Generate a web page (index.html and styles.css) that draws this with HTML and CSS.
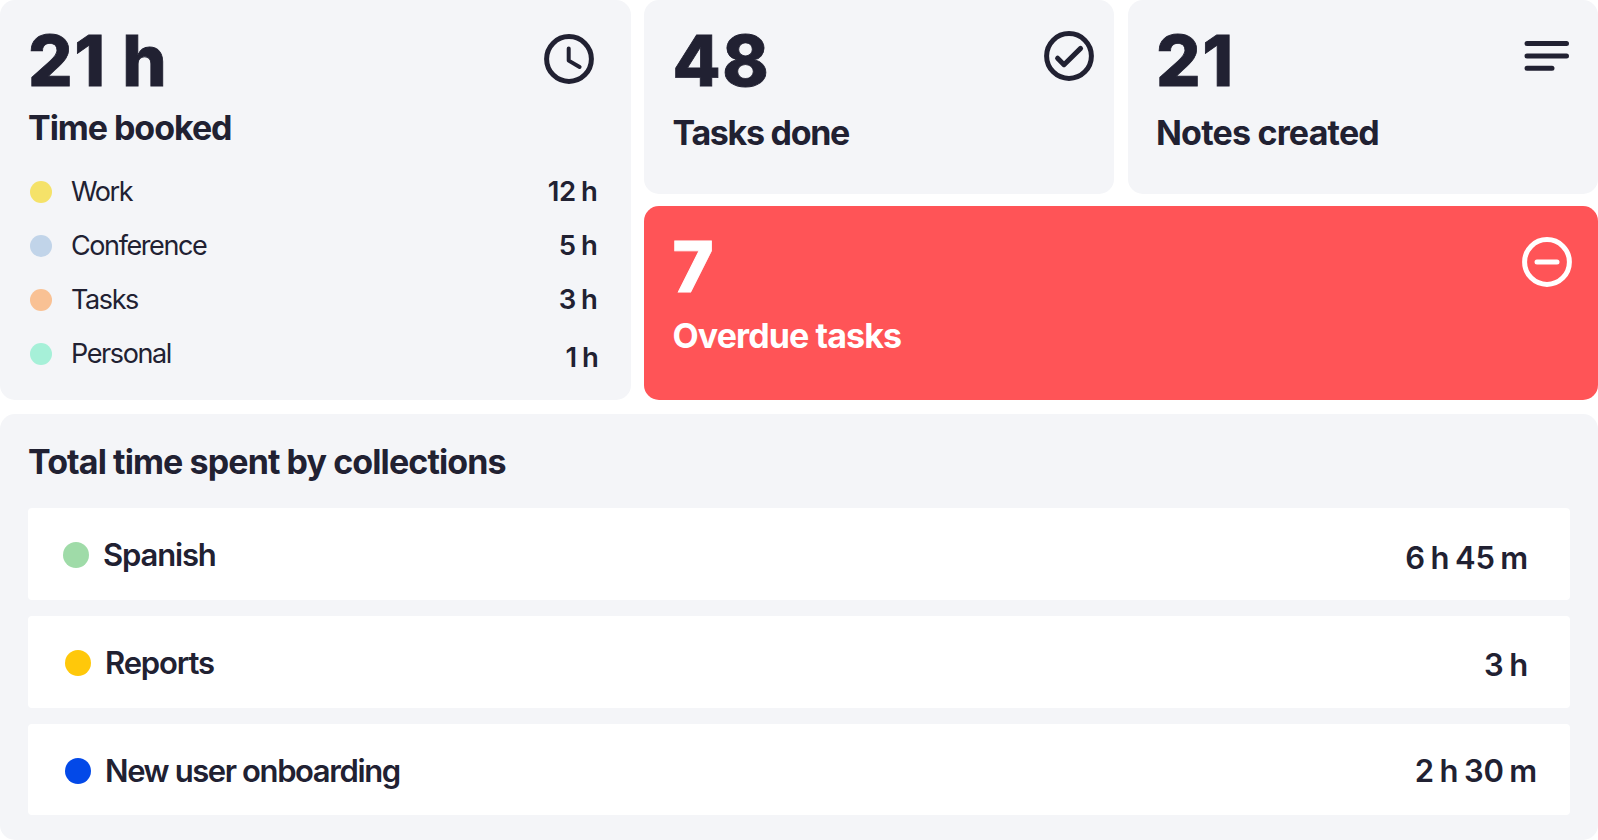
FILE: index.html
```html
<!DOCTYPE html>
<html lang="en">
<head>
    <meta charset="UTF-8">
    <meta name="viewport" content="width=device-width, initial-scale=1.0">
    <title>Time Summary</title>
    <link rel="stylesheet" href="styles.css">
</head>
<body>
    <div class="dashboard">
        <section class="card time-card">
            <div class="card-head">
                <div class="number">21 h</div>
                <svg class="icon" viewBox="0 0 50 50">
                    <circle cx="25" cy="25" r="22.4"/>
                    <path class="thin" d="M24.7 14.5V26.6L35.6 33"/>
                </svg>
            </div>
            <h2>Time booked</h2>
            <ul class="time-list">
                <li><span class="dot yellow"></span><span class="name">Work</span><span class="hours">12 h</span></li>
                <li><span class="dot blue"></span><span class="name">Conference</span><span class="hours">5 h</span></li>
                <li><span class="dot orange"></span><span class="name">Tasks</span><span class="hours">3 h</span></li>
                <li><span class="dot mint"></span><span class="name">Personal</span><span class="hours last">1 h</span></li>
            </ul>
        </section>

        <section class="card tasks-card">
            <div class="card-head">
                <div class="number">48</div>
                <svg class="icon" viewBox="0 0 50 50">
                    <circle cx="25" cy="25" r="22.4"/>
                    <path d="M13.6 27.2L20 33.7L36.6 17.4"/>
                </svg>
            </div>
            <h2>Tasks done</h2>
        </section>

        <section class="card notes-card">
            <div class="card-head">
                <div class="number">21</div>
                <svg class="icon" viewBox="0 0 50 50">
                    <path d="M5 12.5H44.5M5 24.9H44.5M5 37.3H30"/>
                </svg>
            </div>
            <h2>Notes created</h2>
        </section>

        <section class="card overdue-card">
            <div class="card-head">
                <div class="number">7</div>
                <svg class="icon" viewBox="0 0 50 50">
                    <circle cx="25" cy="25" r="22.4"/>
                    <path d="M15 25H35"/>
                </svg>
            </div>
            <h2>Overdue tasks</h2>
        </section>

        <section class="card collections-card">
            <h2>Total time spent by collections</h2>
            <div class="collections">
                <div class="collection spanish">
                    <span class="dot green"></span>
                    <span class="name">Spanish</span>
                    <span class="hours">6 h 45 m</span>
                </div>
                <div class="collection reports">
                    <span class="dot amber"></span>
                    <span class="name">Reports</span>
                    <span class="hours">3 h</span>
                </div>
                <div class="collection onboarding">
                    <span class="dot royal"></span>
                    <span class="name">New user onboarding</span>
                    <span class="hours">2 h 30 m</span>
                </div>
            </div>
        </section>
    </div>
</body>
</html>
```
FILE: styles.css
```css
* {
    box-sizing: border-box;
}
body {
    margin: 0;
    background: white;
    color: #212132;
    font-family: Inter, "Liberation Sans", sans-serif;
}
.dashboard {
    display: grid;
    grid-template-columns: 630.5px 470px 470.5px;
    grid-template-rows: 194px 194px 428px;
    column-gap: 13.5px;
    row-gap: 12px;
    height: 840px;
}
.card {
    background: #f4f5f8;
    border-radius: 15px;
    padding: 26px 26px 0 28.5px;
}
.card-head {
    display: flex;
    justify-content: space-between;
    align-items: flex-start;
}
.number {
    font-size: 70px;
    line-height: 70px;
    font-weight: 800;
    letter-spacing: 1.5px;
    word-spacing: -1px;
    -webkit-text-stroke: 0.8px currentColor;
}
h2 {
    margin: 17px 0 0;
    font-size: 34px;
    line-height: 40px;
    font-weight: 660;
    letter-spacing: -0.9px;
}
.icon {
    width: 50px;
    height: 50px;
    margin-top: 5px;
    fill: none;
    stroke: currentColor;
    stroke-width: 5;
    stroke-linecap: round;
    stroke-linejoin: round;
}
.icon .thin {
    stroke-width: 4;
}
.dot {
    flex: none;
    border-radius: 50%;
}

/* Time booked */
.time-card {
    grid-row: 1 / 3;
    padding-left: 28px;
    padding-right: 33px;
}
.time-card .icon {
    margin-top: 8px;
    margin-right: 3.5px;
}
.time-card h2 {
    margin-top: 12px;
    letter-spacing: -1.05px;
}
.time-list {
    list-style: none;
    margin: 16px 0 0;
    padding: 0;
}
.time-list li {
    display: flex;
    align-items: center;
    height: 54px;
    font-size: 27.5px;
    letter-spacing: -0.3px;
}
.time-list .dot {
    width: 22px;
    height: 22px;
    margin: 1px 19px 0 2px;
}
.time-list .name {
    font-size: 27px;
    letter-spacing: -1.4px;
}
.time-list .hours {
    margin-left: auto;
    font-weight: 560;
    word-spacing: -1.5px;
}
.time-list .last {
    padding-top: 7px;
    margin-right: -1px;
}

/* Right side */
.tasks-card {
    padding-right: 20px;
}
.tasks-card h2 {
    letter-spacing: -1.3px;
}
.notes-card h2 {
    letter-spacing: -0.8px;
}
.overdue-card {
    grid-column: 2 / 4;
    background: #ff5457;
    color: white;
}
.overdue-card h2 {
    margin-top: 14px;
}

/* Collections */
.collections-card {
    grid-column: 1 / 4;
    margin-top: 2px;
    padding: 28px 28px 0;
}
.collections-card h2 {
    margin: 0;
}
.collections {
    display: grid;
    grid-template-rows: 92px 92px 91px;
    gap: 16px;
    margin-top: 26px;
}
.collection {
    display: flex;
    align-items: center;
    background: white;
    border-radius: 4px;
    padding: 1px 42px 0 37px;
    font-size: 31px;
    font-weight: 560;
    letter-spacing: -1.15px;
}
.collection .dot {
    width: 26px;
    height: 26px;
    margin-right: 14px;
}
.collection .hours {
    margin-left: auto;
    letter-spacing: -0.2px;
    word-spacing: -2px;
}
.spanish {
    padding-left: 35px;
}
.spanish .hours {
    padding-top: 6px;
}
.reports .hours {
    padding-top: 3px;
}
.onboarding {
    padding-top: 2px;
    padding-right: 33px;
}
.onboarding .name {
    letter-spacing: -1.4px;
}

.yellow { background: #f5e269; }
.blue { background: #c1d4e9; }
.orange { background: #f9c194; }
.mint { background: #a6f0d8; }
.green { background: #9fdba8; }
.amber { background: #ffc80a; }
.royal { background: #0349e8; }
```
